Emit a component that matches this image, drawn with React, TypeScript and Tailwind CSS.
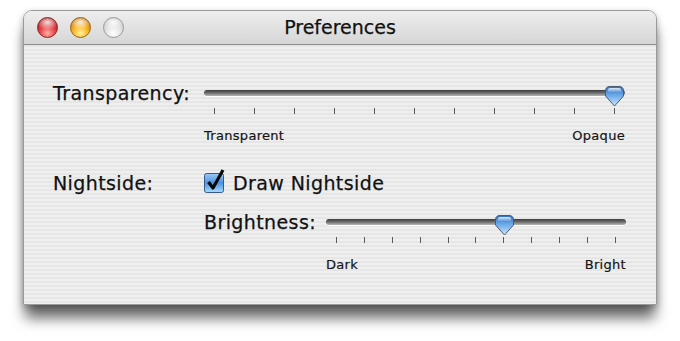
import React from "react";

const font = { fontFamily: '"DejaVu Sans", "Liberation Sans", sans-serif' };

function Thumb({ left }: { left: number }) {
  return (
    <svg
      width="21"
      height="23"
      viewBox="0 0 21 23"
      className="absolute top-[2px]"
      style={{ left }}
    >
      <defs>
        <linearGradient id="tg" x1="0" y1="0" x2="0" y2="1">
          <stop offset="0" stopColor="#2f6fc0" />
          <stop offset="0.45" stopColor="#6aa9ea" />
          <stop offset="1" stopColor="#cfe6fb" />
        </linearGradient>
        <linearGradient id="th" x1="0" y1="0" x2="0" y2="1">
          <stop offset="0" stopColor="#ffffff" stopOpacity="0.85" />
          <stop offset="1" stopColor="#ffffff" stopOpacity="0.1" />
        </linearGradient>
      </defs>
      <path
        d="M1.5,6 Q1.5,1.5 6,1.5 L15,1.5 Q19.5,1.5 19.5,6 L19.5,11 L10.5,21 L1.5,11 Z"
        fill="url(#tg)"
        stroke="#4a5a70"
        strokeWidth="1"
      />
      <path d="M4,4.5 Q4,3 6,3 L15,3 Q17,3 17,4.5 L17,7 L4,7 Z" fill="url(#th)" />
    </svg>
  );
}

function Slider({
  width,
  thumbLeft,
  left,
  right,
}: {
  width: number;
  thumbLeft: number;
  left: string;
  right: string;
}) {
  return (
    <div className="flex flex-col" style={{ width }}>
      <div className="relative h-[20px] flex items-center">
        <div className="w-full h-[6px] rounded-full bg-gradient-to-b from-[#3c3c3c] via-[#6e6e6e] to-[#b9b9b9] shadow-[0_1px_0_rgba(255,255,255,0.9)]" />
        <Thumb left={thumbLeft} />
      </div>
      <div className="flex justify-between px-[10px] mt-[5px] h-[6px]">
        {Array.from({ length: 11 }).map((_, i) => (
          <div key={i} className="w-[1px] h-[6px] bg-[#5a5a5a]" />
        ))}
      </div>
      <div className="flex justify-between mt-[14px] h-[16px] leading-[16px] text-[13px] tracking-[0.3px] text-[#151515] [-webkit-text-stroke:0.2px_#151515]">
        <span>{left}</span>
        <span>{right}</span>
      </div>
    </div>
  );
}

function Checkbox() {
  return (
    <svg width="24" height="28" viewBox="0 0 24 28" className="-mt-[8px] mr-[5px]">
      <defs>
        <linearGradient id="cb" x1="0" y1="0" x2="0" y2="1">
          <stop offset="0" stopColor="#9cc9f4" />
          <stop offset="0.5" stopColor="#4c93e2" />
          <stop offset="1" stopColor="#a9dcfb" />
        </linearGradient>
      </defs>
      <rect x="0.5" y="8.5" width="19" height="19" rx="2" fill="url(#cb)" stroke="#3c5a86" />
      <path d="M4.5,17 L9,23 L19,5" fill="none" stroke="#0a0a0a" strokeWidth="3.2" strokeLinejoin="round" />
    </svg>
  );
}

function Light({ cls }: { cls: string }) {
  return <div className={`w-[21px] h-[21px] rounded-full ${cls}`} />;
}

const big = "h-[20px] leading-[20px] text-[19px] tracking-[0.4px] [-webkit-text-stroke:0.25px_#111]";

export default function App() {
  return (
    <div className="w-[680px] h-[341px] bg-white overflow-hidden pt-[10px] pl-[23px]" style={font}>
      <div className="w-[634px] h-[295px] rounded-t-[9px] border border-[#9a9a9a] overflow-hidden flex flex-col shadow-[0_15px_14px_-2px_rgba(0,0,0,0.6),0_2px_6px_rgba(0,0,0,0.25)] bg-[repeating-linear-gradient(180deg,#efefef_0px,#efefef_2px,#e6e6e6_2px,#e6e6e6_4px)]">
        <div className="relative h-[34px] shrink-0 flex items-center bg-gradient-to-b from-[#eeeeee] to-[#d6d6d6] border-b border-[#8a8a8a]">
          <div className="flex gap-[12px] pl-[13px]">
            <Light cls="border border-[#8a2020] bg-[radial-gradient(ellipse_60%_40%_at_50%_22%,rgba(255,255,255,0.85)_0%,rgba(255,255,255,0)_100%),radial-gradient(circle_at_50%_80%,#ffb0a8_0%,#e8484a_40%,#b01818_75%,#7a1010_100%)]" />
            <Light cls="border border-[#9a6208] bg-[radial-gradient(ellipse_60%_40%_at_50%_22%,rgba(255,255,255,0.85)_0%,rgba(255,255,255,0)_100%),radial-gradient(circle_at_50%_80%,#fff3a0_0%,#f9b926_40%,#d07a06_75%,#8a5204_100%)]" />
            <Light cls="border border-[#9a9a9a] bg-[radial-gradient(ellipse_60%_40%_at_50%_22%,rgba(255,255,255,0.9)_0%,rgba(255,255,255,0)_100%),radial-gradient(circle_at_50%_80%,#ffffff_0%,#e6e6e6_40%,#c4c4c4_80%,#a8a8a8_100%)]" />
          </div>
          <div className="absolute inset-0 flex items-center justify-center text-[19px] text-[#111] [-webkit-text-stroke:0.25px_#111] pointer-events-none">
            Preferences
          </div>
        </div>

        <div className="flex flex-col pl-[29px] pt-[38px] text-[#111]">
          <div className="flex items-start">
            <div className={`w-[151px] ${big}`}>Transparency:</div>
            <Slider width={421} thumbLeft={400} left="Transparent" right="Opaque" />
          </div>

          <div className="flex items-start mt-[29px]">
            <div className={`w-[151px] ${big}`}>Nightside:</div>
            <div className="flex items-start h-[20px]">
              <Checkbox />
              <span className={big}>Draw Nightside</span>
            </div>
          </div>

          <div className="flex items-start mt-[19px] pl-[151px]">
            <div className={`w-[122px] ${big}`}>Brightness:</div>
            <Slider width={300} thumbLeft={168} left="Dark" right="Bright" />
          </div>
        </div>
      </div>
    </div>
  );
}
